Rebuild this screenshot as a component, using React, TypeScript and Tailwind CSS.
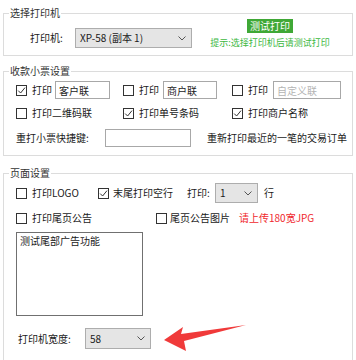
import React from "react";

function Check({ checked }: { checked?: boolean }) {
  return (
    <span className="w-[11px] h-[11px] border border-[#333] bg-white flex items-center justify-center shrink-0">
      {checked && (
        <svg width="9" height="9" viewBox="0 0 9 9">
          <path d="M1.2 4.6 L3.6 7 L8 1.6" stroke="#333" strokeWidth="1" fill="none" />
        </svg>
      )}
    </span>
  );
}

function Chevron() {
  return (
    <svg width="8" height="5" viewBox="0 0 8 5" className="shrink-0">
      <path d="M0.5 0.5 L4 4 L7.5 0.5" stroke="#555" strokeWidth="1" fill="none" />
    </svg>
  );
}

export default function App() {
  return (
    <div className="relative w-[356px] h-[360px] overflow-hidden bg-white text-[10px] text-[#1a1a1a] font-['Noto_Sans_CJK_SC','Noto_Sans',sans-serif] pt-[6px]">
      {/* Group 1 */}
      <fieldset className="ml-[3px] w-[350px] border border-[#dcdcdc]">
        <legend className="ml-[5px] px-[1px] leading-[14px] text-[#333]">选择打印机</legend>
        <div className="flex -mt-[1px] pl-[26px] pb-[6px]">
          <div className="flex items-center mt-[9px] h-[20px]">
            <span className="w-[45px] leading-[14px]">打印机:</span>
            <div className="w-[117px] h-[20px] flex items-center justify-between border border-[#adadad] bg-[#e5e5e5] pl-[4px] pr-[5px]">
              <span className="leading-[14px]">XP-58 (副本 1)</span>
              <Chevron />
            </div>
          </div>
          <div className="ml-[13px] w-[130px] flex flex-col items-center">
            <span className="bg-[#3fa836] text-white px-[3px] h-[14px] leading-[14px]">测试打印</span>
            <span className="mt-[4px] text-[9px] leading-[12px] text-[#3db83f]">提示:选择打印机后请测试打印</span>
          </div>
        </div>
      </fieldset>

      {/* Group 2 */}
      <fieldset className="ml-[3px] mt-[8px] w-[350px] border border-[#dcdcdc]">
        <legend className="ml-[5px] px-[1px] leading-[14px] text-[#333]">收款小票设置</legend>
        <div className="pl-[12px] pb-[8px]">
          <div className="grid grid-cols-[107px_109px_1fr] mt-[3px] h-[18px] items-center">
            <div className="flex items-center">
              <Check checked />
              <span className="ml-[5px] leading-[14px]">打印</span>
              <div className="ml-[3px] w-[55px] h-[18px] border border-[#a8a8a8] px-[3px] flex items-center">客户联</div>
            </div>
            <div className="flex items-center">
              <Check />
              <span className="ml-[5px] leading-[14px]">打印</span>
              <div className="ml-[4px] w-[54px] h-[18px] border border-[#a8a8a8] px-[3px] flex items-center">商户联</div>
            </div>
            <div className="flex items-center">
              <Check />
              <span className="ml-[5px] leading-[14px]">打印</span>
              <div className="ml-[5px] w-[68px] h-[18px] border border-[#a8a8a8] px-[3px] flex items-center text-[#b4b4b4]">自定义联</div>
            </div>
          </div>
          <div className="grid grid-cols-[107px_109px_1fr] mt-[6px] h-[16px] items-center">
            <div className="flex items-center">
              <Check />
              <span className="ml-[5px] leading-[14px]">打印二维码联</span>
            </div>
            <div className="flex items-center">
              <Check checked />
              <span className="ml-[5px] leading-[14px]">打印单号条码</span>
            </div>
            <div className="flex items-center">
              <Check checked />
              <span className="ml-[5px] leading-[14px]">打印商户名称</span>
            </div>
          </div>
          <div className="flex items-center mt-[8px] h-[18px]">
            <span className="w-[89px] leading-[14px]">重打小票快捷键:</span>
            <div className="w-[86px] h-[18px] border border-[#a8a8a8]" />
            <span className="ml-[16px] leading-[14px]">重新打印最近的一笔的交易订单</span>
          </div>
        </div>
      </fieldset>

      {/* Group 3 */}
      <fieldset className="ml-[3px] mt-[10px] w-[350px] border border-[#dcdcdc]">
        <legend className="ml-[5px] px-[1px] leading-[14px] text-[#333]">页面设置</legend>
        <div className="pl-[12px] pb-[20px]">
          <div className="flex items-center mt-[3px] h-[20px]">
            <div className="w-[82px] flex items-center">
              <Check />
              <span className="ml-[5px] leading-[14px]">打印LOGO</span>
            </div>
            <div className="w-[89px] flex items-center">
              <Check checked />
              <span className="ml-[4px] leading-[14px]">末尾打印空行</span>
            </div>
            <span className="w-[28px] leading-[14px]">打印:</span>
            <div className="w-[43px] h-[20px] flex items-center justify-between border border-[#adadad] bg-[#e5e5e5] pl-[4px] pr-[5px]">
              <span className="leading-[14px]">1</span>
              <Chevron />
            </div>
            <span className="ml-[6px] leading-[14px]">行</span>
          </div>
          <div className="flex items-center mt-[7px] h-[16px]">
            <div className="w-[140px] flex items-center">
              <Check />
              <span className="ml-[5px] leading-[14px]">打印尾页公告</span>
            </div>
            <Check />
            <span className="ml-[3px] leading-[14px]">尾页公告图片</span>
            <span className="ml-[9px] leading-[14px] text-[#f0282d]">请上传180宽JPG</span>
          </div>
          <div className="mt-[6px] w-[127px] h-[84px] border border-[#707070] px-[3px] pt-[1px] leading-[14px]">
            测试尾部广告功能
          </div>
          <div className="flex items-center mt-[12px] h-[21px] pl-[2px]">
            <span className="w-[67px] leading-[14px]">打印机宽度:</span>
            <div className="w-[66px] h-[21px] flex items-center justify-between border border-[#adadad] bg-[#e5e5e5] pl-[4px] pr-[5px]">
              <span className="leading-[14px]">58</span>
              <Chevron />
            </div>
          </div>
        </div>
      </fieldset>

      {/* Red arrow annotation */}
      <svg className="absolute left-0 top-0 pointer-events-none" width="356" height="360" viewBox="0 0 356 360">
        <path d="M164 340 L183 327 L181 334 L246 325 L184 341 L186 351 Z" fill="#f03a3a" />
      </svg>
    </div>
  );
}
